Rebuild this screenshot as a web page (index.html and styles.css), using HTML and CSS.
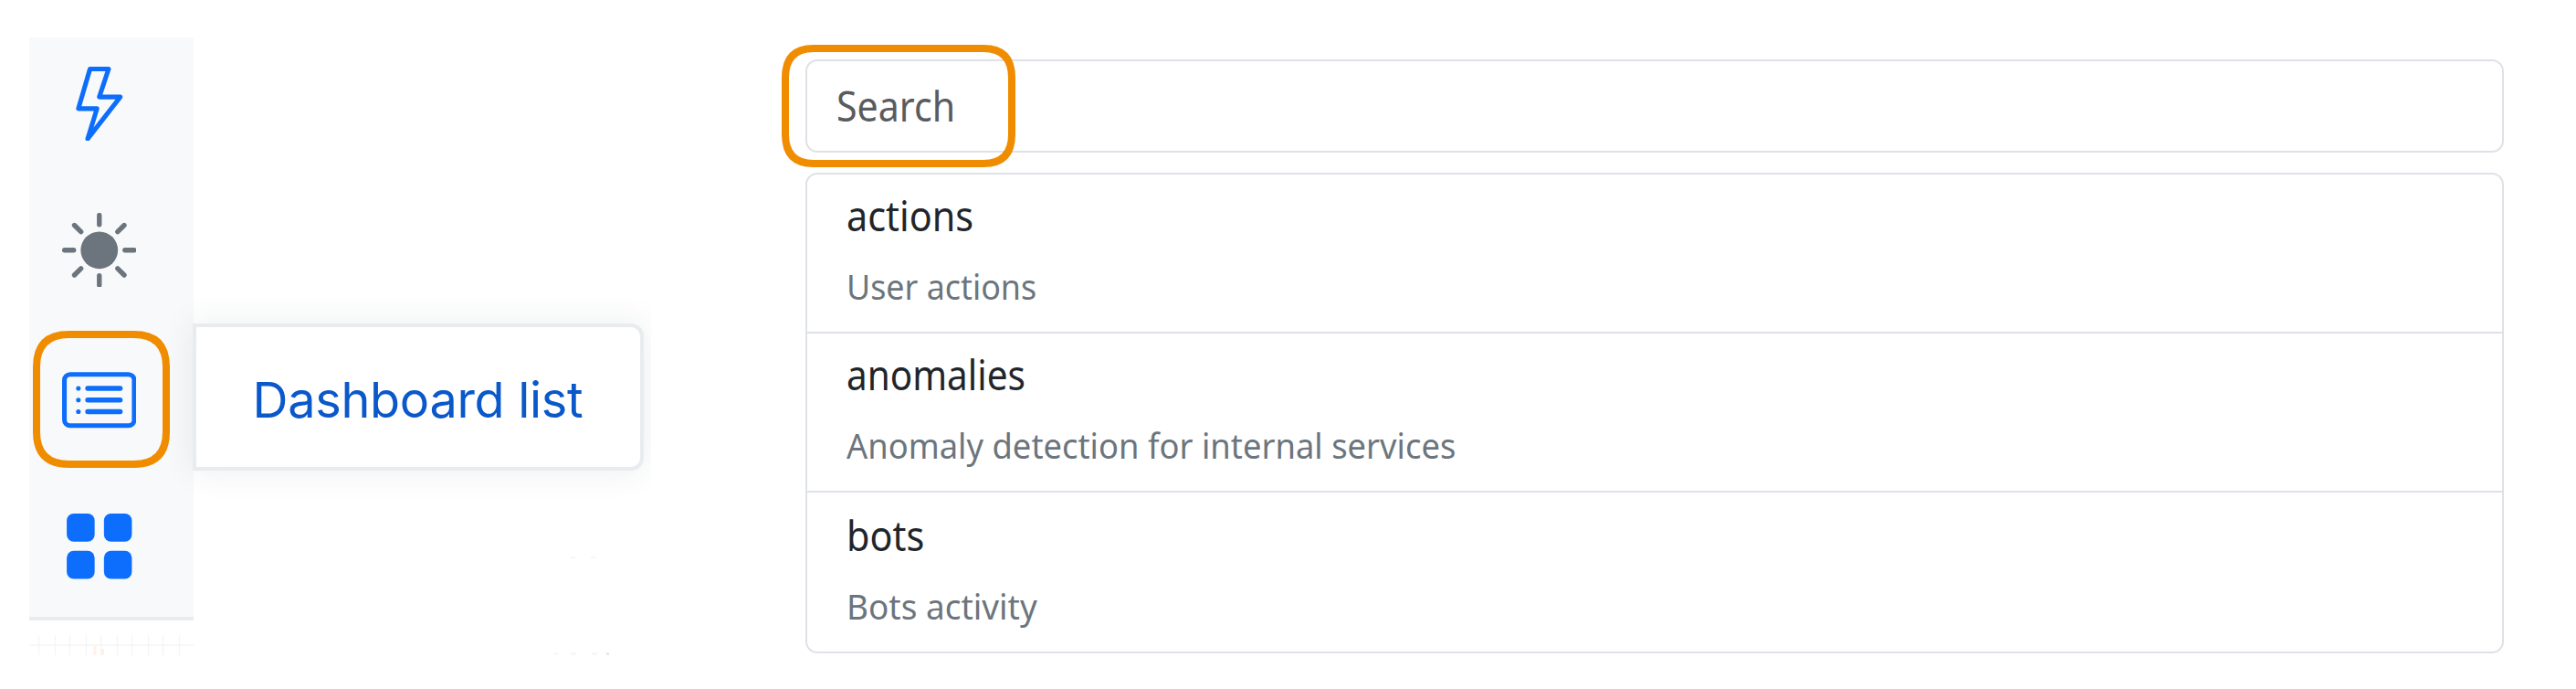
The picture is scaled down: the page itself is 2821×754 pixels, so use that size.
FILE: index.html
```html
<!DOCTYPE html>
<html lang="en">
<head>
<meta charset="utf-8">
<title>Dashboard list</title>
<link rel="stylesheet" href="styles.css">
</head>
<body>
<main class="page">
  <section class="left">
    <nav class="sidebar">
      <svg class="icon blue" viewBox="0 0 16 16"><path d="M5.52.359A.5.5 0 0 1 6 0h4a.5.5 0 0 1 .474.658L8.694 6H12.500a.5.5 0 0 1 .395.807l-7 9a.5.5 0 0 1-.873-.454L6.823 9.500H3.500a.5.5 0 0 1-.48-.641zM6.374 1 4.168 8.500H7.500a.5.5 0 0 1 .478.647L6.780 13.040 11.478 7H8a.5.5 0 0 1-.474-.658L9.306 1z"/></svg>
      <svg class="icon gray" viewBox="0 0 16 16"><circle cx="8" cy="8" r="4"/><path class="rays" d="M8 .5v2M8 13.500v2M.5 8h2M13.500 8h2M2.650 2.650l1.410 1.410M11.940 11.940l1.410 1.410M2.650 13.350l1.410-1.410M11.940 4.060l1.410-1.410"/></svg>
      <span class="marked">
        <svg class="icon blue" viewBox="0 0 16 16"><rect class="outline" x=".5" y="2.500" width="15" height="11" rx="1.250"/><path class="rays" d="M5.500 5.500h7M5.500 8h7M5.500 10.500h7"/><circle cx="3.500" cy="5.500" r=".5"/><circle cx="3.500" cy="8" r=".5"/><circle cx="3.500" cy="10.500" r=".5"/></svg>
        <svg class="ring ring-icon" viewBox="0 0 150 150"><path d="M39.500 4H110.500Q146 4 146 39.500V110.500Q146 146 110.500 146H39.500Q4 146 4 110.500V39.500Q4 4 39.500 4Z"/></svg>
      </span>
      <svg class="icon blue" viewBox="0 0 16 16"><rect x="1" y="1" width="6" height="6" rx="1.500"/><rect x="9" y="1" width="6" height="6" rx="1.500"/><rect x="1" y="9" width="6" height="6" rx="1.500"/><rect x="9" y="9" width="6" height="6" rx="1.500"/></svg>
    </nav>
    <svg class="chart" viewBox="0 0 681 40"><path class="grid" d="M0 27H180M10.500 16V38M28.500 16V38M44.500 16V38M62.500 16V38M78.500 16V38M96.500 16V38M112.500 16V38M130.500 16V38M146.500 16V38M164.500 16V38"/><path class="bar" d="M72 28V38M80.500 31V38"/><path class="speck" d="M574 36.500h5M593 36.500h6M616 36.500h6"/><path class="speck dark" d="M632 36.500h3"/></svg>
    <div class="tooltip"><span class="tip-text">Dashboard list</span></div>
    <svg class="dots" viewBox="0 0 28 2"><path class="speck" d="M0 1h5M22 1h5"/></svg>
  </section>
  <section class="content">
    <div class="search"><span class="fit fit-search">Search</span>
      <svg class="ring ring-search" viewBox="0 0 256 134"><path d="M35 4H221Q252 4 252 36V98Q252 130 221 130H35Q4 130 4 98V36Q4 4 35 4Z"/></svg>
    </div>
    <ul class="list">
      <li class="item"><span class="fit name">actions</span><span class="fit desc">User actions</span></li>
      <li class="item"><span class="fit name name-long">anomalies</span><span class="fit desc desc-long">Anomaly detection for internal services</span></li>
      <li class="item"><span class="fit name">bots</span><span class="fit desc desc-wide">Bots activity</span></li>
    </ul>
  </section>
</main>
</body>
</html>
```
FILE: styles.css
```css
* { box-sizing: border-box; }
body { margin: 0; background: #fff; overflow: hidden; }
.page { display: flex; width: 2821px; height: 754px; }
.left { position: relative; width: 713px; flex: none; padding: 41px 0 0 32px; overflow: hidden; }
.sidebar {
  width: 179.500px; height: 638px; background: #f8f9fb; border-bottom: 4px solid #e9ebef;
  display: flex; flex-direction: column; gap: 78.500px; padding: 31.500px 0 0 35.500px;
}
.icon { display: block; width: 81.500px; height: 81.500px; flex: none; }
.blue { fill: #0d6efd; color: #0d6efd; }
.gray { fill: #6c757d; color: #6c757d; }
.rays { stroke: currentColor; stroke-width: 1.050; stroke-linecap: round; fill: none; }
.outline { stroke: currentColor; stroke-width: 1; fill: none; }
.marked { position: relative; width: 81.500px; height: 81.500px; margin-top: 4px; flex: none; }
.ring { position: absolute; display: block; fill: none; stroke: #f08c00; stroke-width: 8; }
.ring-icon { width: 150px; height: 150px; left: -32px; top: -35px; }
.ring-search { width: 256px; height: 134px; left: -28px; top: -18px; }
.chart { display: block; width: 681px; height: 40px; }
.grid { stroke: #f5f5f5; stroke-width: 1.500; }
.bar { stroke: #fff1ea; stroke-width: 3; }
.speck { stroke: #f6f6f6; stroke-width: 2; }
.dark { stroke: #dddddd; }
.dots { position: absolute; left: 625px; top: 609px; width: 28px; height: 2px; }
.tooltip {
  position: absolute; left: 211px; top: 354px; width: 494px; height: 161px;
  display: flex; align-items: center; padding: 6px 0 0 61.500px;
  background: #fff; border: 4px solid #e9ecef; border-radius: 0 14px 14px 0;
  box-shadow: 0 0 36px rgba(33, 50, 60, .09);
}
.tip-text { font: 400 54px/64px Inter, sans-serif; letter-spacing: -.3px; color: #0a58ca; white-space: nowrap; }
.content { flex: none; width: 1860px; margin: 65px 0 0 168.500px; }
.search, .list { border: 2px solid #dee2e6; border-radius: 13px; }
.search { position: relative; height: 102px; margin-bottom: 22px; padding: 16.500px 0 0 32px; }
.list { list-style: none; margin: 0; padding: 0; height: 526px; }
.item { height: 174px; padding: 13px 0 0 43px; display: flex; flex-direction: column; align-items: flex-start; }
.item:first-child { height: 172px; }
.item:last-child { padding-top: 15px; }
.item + .item { border-top: 2px solid #dee2e6; }
.fit { display: block; width: fit-content; white-space: nowrap; transform-origin: left; font-family: "Noto Sans", sans-serif; }
.fit-search { font-size: 45px; line-height: 64px; color: #595c5f; transform: scaleX(.913); }
.name { font-size: 45px; line-height: 64px; color: #212529; transform: scaleX(.92); }
.name-long { transform: scaleX(.9); }
.desc { font-size: 38px; line-height: 54px; margin-top: 18px; color: #6c757d; transform: scaleX(.943); }
.desc-long { transform: scaleX(.957); }
.desc-wide { transform: scaleX(.972); }
```
